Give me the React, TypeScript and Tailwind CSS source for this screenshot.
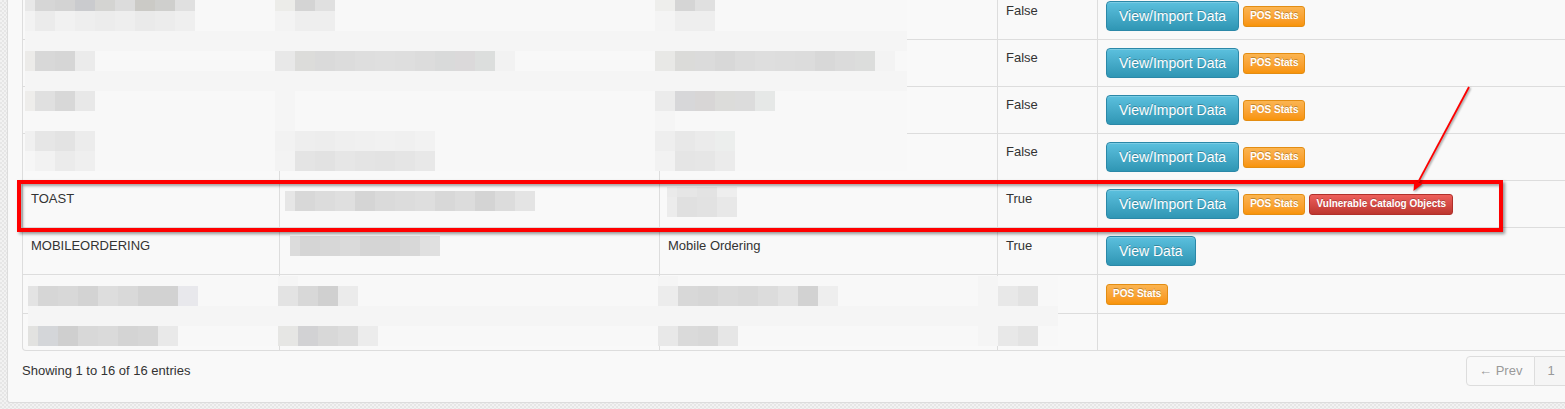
import React from "react";

type Run = [number, number, string[]];
type Action = "import" | "view" | "pos" | "vuln";

type Row = {
  name?: string;
  label?: string;
  active?: string;
  actions: Action[];
};

const rows: Row[] = [
  { active: "False", actions: ["import", "pos"] },
  { active: "False", actions: ["import", "pos"] },
  { active: "False", actions: ["import", "pos"] },
  { active: "False", actions: ["import", "pos"] },
  { name: "TOAST", active: "True", actions: ["import", "pos", "vuln"] },
  { name: "MOBILEORDERING", label: "Mobile Ordering", active: "True", actions: ["view"] },
  { actions: ["pos"] },
  { actions: [] },
];

// redaction mosaics (pixelated blocks over the hidden cells)
const topCols = [10, ...Array(43).fill(20), 12];
const topRows = [11, ...Array(8).fill(20)];
const topRuns: Run[] = [
  [0, 25, ["#e8e8e8", "#d6d6d6", "#d3d3d3", "#cacbce", "#d4d4d2", "#dcdcdc", "#cbcac6", "#cfcfcd", "#e0e0e0"]],
  [0, 275, ["#ecece9", "#d4d4d4", "#e0e0e0"]],
  [0, 655, ["#eeeeec", "#d5d5d5", "#e0e0e0"]],
  [1, 25, ["#f2f2f2", "#ebebeb", "#f1f1f1", "#eeeeee", "#ececec", "#eeeeee", "#eaeaea", "#ececec", "#efefef"]],
  [1, 275, ["#f3f3f3", "#eeeeee", "#eeeeee"]],
  [1, 655, ["#f4f4f4", "#eeeeee", "#eeeeee"]],
  [3, 25, ["#ecebe9", "#d8d8d8", "#d6d6d6", "#ebebeb"]],
  [3, 275, ["#e8e8e8", "#dcdcda", "#dadada", "#dcdcdc", "#dedede", "#dfdfdf", "#dedede", "#dcdcdc", "#d9dada", "#dbd9da", "#dcdedd", "#f2f2f2"]],
  [3, 655, ["#e8e8e6", "#dbdbd9", "#dbdbdb", "#d8d8d8", "#dcdcdc", "#dedede", "#dddddd", "#dcdcdc", "#d8d8d8", "#dbdbdb", "#dcdddc", "#f3f3f3"]],
  [5, 25, ["#eeedeb", "#e0e0e0", "#d8d8d8", "#e8e8e8"]],
  [5, 655, ["#ebebeb", "#d7d7d9", "#d8d6d6", "#dcdcda", "#dcdcdc", "#e6e8e7"]],
  [7, 25, ["#f0f0f0", "#e6e6e6", "#e3e3e3", "#ececec"]],
  [7, 275, ["#f2f2f2", "#eeeeee", "#ededed", "#efefef", "#f0f0f0", "#f1f1f1", "#f0f0f0", "#f2f2f2"]],
  [7, 655, ["#eeeeee", "#e8e8e8", "#ebebeb", "#eceeed"]],
  [8, 25, ["#f6f6f6", "#f2f2f2", "#ebebeb", "#efefef"]],
  [8, 275, ["#f3f3f3", "#e4e4e4", "#e2e2e2", "#e6e6e6", "#e4e4e4", "#e3e3e3", "#e5e5e5", "#e8e8e8"]],
  [8, 655, ["#f2f2f2", "#e5e5e5", "#e6e6e6", "#ebebeb"]],
];

const bottomCols = [10, ...Array(51).fill(20)];
const bottomRows = [10, 20, 20, 20];
const bottomRuns: Run[] = [
  [1, 28, ["#e3e3e3", "#d6d6d6", "#d8d8d8", "#d3d3d3", "#dddddd", "#d9d9d9", "#d2d2d2", "#d2d2d2", "#e8e8ec"]],
  [1, 278, ["#e3e3e3", "#d8d8d8", "#d0d0d0", "#ebebeb"]],
  [1, 658, ["#ececec", "#d8d8d8", "#d6d6d6", "#dadada", "#d8d8d8", "#dcdcdc", "#e2e2e2", "#d2d2d2", "#eeeeee"]],
  [1, 998, ["#e8e8e8", "#e2e2e2"]],
  [3, 28, ["#e2e2e0", "#d4d6d9", "#cfcfcf", "#d8d8d8", "#dadada", "#d4d4d4", "#d6d6d6", "#e9e9e9"]],
  [3, 278, ["#e6e6e4", "#d2d2d4", "#d8d8d8", "#dcdcdc", "#ececec"]],
  [3, 658, ["#e8e8e8", "#dadada", "#d8d8d8", "#e6e6e6"]],
  [3, 998, ["#e8e8e8", "#e3e3e3"]],
];

function Mosaic({
  className,
  x0,
  cols,
  rowsH,
  runs,
  base,
}: {
  className: string;
  x0: number;
  cols: number[];
  rowsH: number[];
  runs: Run[];
  base: (r: number, c: number) => string;
}) {
  const starts: number[] = [];
  cols.reduce((x, w) => {
    starts.push(x);
    return x + w;
  }, x0);
  const grid = rowsH.map((_, r) => cols.map((_, c) => base(r, c)));
  runs.forEach(([r, x, list]) => {
    const c = starts.indexOf(x);
    list.forEach((bg, i) => (grid[r][c + i] = bg));
  });
  return (
    <div
      className={`absolute grid ${className}`}
      style={{
        gridTemplateColumns: cols.map((w) => `${w}px`).join(" "),
        gridTemplateRows: rowsH.map((h) => `${h}px`).join(" "),
      }}
    >
      {grid.flat().map((bg, i) => (
        <div key={i} style={{ backgroundColor: bg }} />
      ))}
    </div>
  );
}

function ActionButton({ kind }: { kind: Action }) {
  if (kind === "import" || kind === "view") {
    return (
      <button
        type="button"
        className="h-[30px] px-[12px] rounded-[4px] border border-[#2b88a8] bg-linear-to-b from-[#5bc0de] to-[#2f96b4] text-white text-[14px] leading-[20px] [text-shadow:0_-1px_0_rgba(0,0,0,0.25)] shadow-[inset_0_1px_0_rgba(255,255,255,0.2)]"
      >
        {kind === "import" ? "View/Import Data" : "View Data"}
      </button>
    );
  }
  if (kind === "pos") {
    return (
      <span className="inline-flex items-center h-[21px] px-[6px] rounded-[3px] border border-[#e38d13] bg-linear-to-b from-[#fbb450] to-[#f89406] text-white text-[10px] font-bold [text-shadow:0_-1px_0_rgba(0,0,0,0.25)]">
        POS Stats
      </span>
    );
  }
  return (
    <span className="inline-flex items-center h-[21px] px-[6px] rounded-[3px] border border-[#b0302b] bg-linear-to-b from-[#ee5f5b] to-[#bd362f] text-white text-[10px] font-bold [text-shadow:0_-1px_0_rgba(0,0,0,0.25)]">
      Vulnerable Catalog Objects
    </span>
  );
}

export default function App() {
  const cell = "min-h-[37px] border-t border-[#ddd] p-2 leading-[20px]";
  return (
    <div className="relative w-[1565px] h-[409px] overflow-hidden bg-[image:repeating-conic-gradient(#e6e6e6_0%_25%,#f2f2f2_0%_50%)] bg-[length:4px_4px] font-['Liberation_Sans',Arial,sans-serif] text-[13px] text-[#333]">
      <div className="ml-[7px] w-[1643px] h-[403px] flex flex-col border-l border-b border-[#dcdcdc] rounded-bl-[3px] bg-[#f9f9f9] px-[14px]">
        <div className="-mt-[8px] grid grid-cols-[256px_380px_338px_100px_1fr] border-x border-b border-[#ddd] rounded-b-[4px]">
          {rows.map((r, i) => (
            <React.Fragment key={i}>
              <div className={cell}>{r.name}</div>
              <div className={`${cell} border-l`}></div>
              <div className={`${cell} border-l`}>{r.label}</div>
              <div className={`${cell} border-l`}>{r.active}</div>
              <div className={`${cell} border-l`}>
                {r.actions.length > 0 && (
                  <div className="flex items-center gap-[4px] min-h-[22px]">
                    {r.actions.map((a) => (
                      <ActionButton key={a} kind={a} />
                    ))}
                  </div>
                )}
              </div>
            </React.Fragment>
          ))}
        </div>

        <div className="mt-[5px] flex items-center h-[30px]">
          <div className="leading-[20px]">Showing 1 to 16 of 16 entries</div>
          <div className="ml-auto flex text-[#999] leading-[20px]">
            <span className="border border-[#ddd] rounded-l-[4px] px-[12px] py-[4px]">← Prev</span>
            <span className="border border-l-0 border-[#ddd] bg-[#f5f5f5] px-[12px] py-[4px]">1</span>
            <span className="border border-l-0 border-[#ddd] rounded-r-[4px] px-[12px] py-[4px]">Next →</span>
          </div>
        </div>
      </div>

      <Mosaic
        className="left-[25px] top-0"
        x0={25}
        cols={topCols}
        rowsH={topRows}
        runs={topRuns}
        base={(r, c) => (r === 2 || r === 4 || c === 13 || c === 32 ? "#f5f5f5" : "#f8f8f8")}
      />
      <Mosaic
        className="left-[28px] top-[276px]"
        x0={28}
        cols={bottomCols}
        rowsH={bottomRows}
        runs={bottomRuns}
        base={(r, c) => (r === 2 || c === 13 || c === 32 || c === 48 ? "#f5f5f5" : "#f8f8f8")}
      />
      <Mosaic
        className="left-[285px] top-[191px]"
        x0={285}
        cols={[10, ...Array(12).fill(20)]}
        rowsH={[20]}
        runs={[[0, 285, ["#e6e6e6", "#d8d8d8", "#dcdcdc", "#dfdfdf", "#d5d5d5", "#dadada", "#dcdcdc", "#dedede", "#d8d8d8", "#dcdcdc", "#d4d4d4", "#dcdcdc", "#e4e4e4"]]]}
        base={() => "#f8f8f8"}
      />
      <Mosaic
        className="left-[667px] top-[187px]"
        x0={667}
        cols={[10, 20, 20, 20]}
        rowsH={[10, 20]}
        runs={[
          [0, 667, ["#eaeaea", "#e6e6e6", "#e3e3e3", "#eeeeee"]],
          [1, 667, ["#ececec", "#e0e0e0", "#e2e2e2", "#e8e8e8"]],
        ]}
        base={() => "#f8f8f8"}
      />
      <Mosaic
        className="left-[290px] top-[236px]"
        x0={290}
        cols={[10, ...Array(7).fill(20)]}
        rowsH={[20]}
        runs={[[0, 290, ["#dcdcdc", "#d5d5d5", "#d7d7d7", "#dadada", "#d5d5d5", "#d5d5d5", "#d8d8d8", "#e0e0e0"]]]}
        base={() => "#f8f8f8"}
      />

      {/* annotation */}
      <div className="absolute left-[17px] top-[180px] w-[1486px] h-[52px] border-4 border-[#ff0000] shadow-[2px_2px_3px_rgba(0,0,0,0.4),inset_2px_2px_3px_rgba(0,0,0,0.35)]" />
      <svg
        className="absolute left-[1400px] top-[80px] w-[80px] h-[120px] drop-shadow-[1px_1px_1px_rgba(0,0,0,0.45)]"
        viewBox="0 0 80 120"
      >
        <line x1="69" y1="7" x2="18.2" y2="102.2" stroke="#ff0000" strokeWidth="1.8" />
        <polygon points="13.5,111 22,104.3 14.4,100.2" fill="#ff0000" />
      </svg>
    </div>
  );
}
